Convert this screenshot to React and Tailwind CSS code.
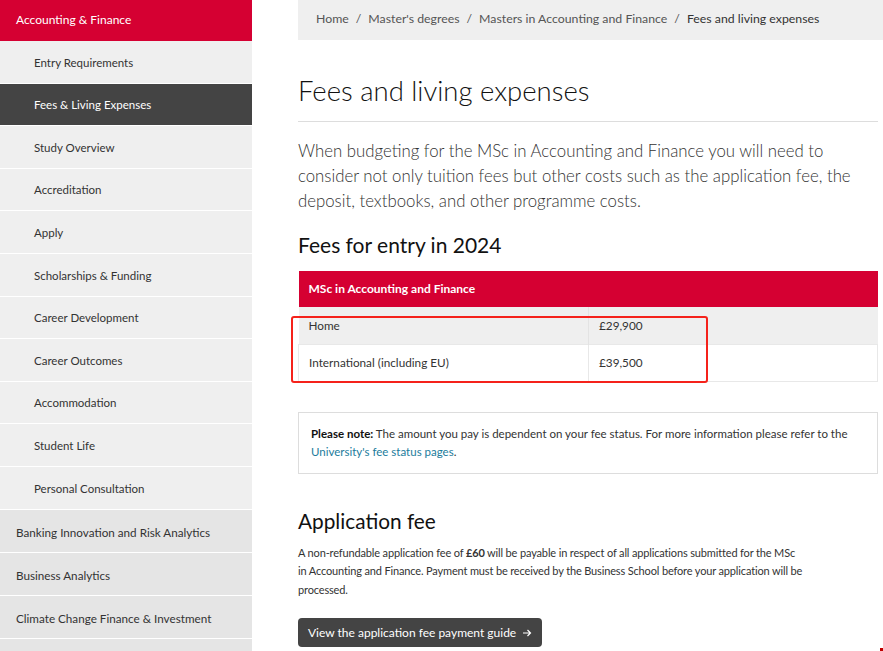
import React from "react";

const subItems = [
  "Entry Requirements",
  "Fees & Living Expenses",
  "Study Overview",
  "Accreditation",
  "Apply",
  "Scholarships & Funding",
  "Career Development",
  "Career Outcomes",
  "Accommodation",
  "Student Life",
  "Personal Consultation",
];

const topItems = [
  "Banking Innovation and Risk Analytics",
  "Business Analytics",
  "Climate Change Finance & Investment",
  "Finance",
];

const font = { fontFamily: "Lato, 'Noto Sans', sans-serif" };

function Sidebar() {
  return (
    <aside className="w-[252px] shrink-0 text-[11.5px]">
      <div className="h-[41px] bg-[#d50032] text-white flex items-center pl-4 pb-[1px] text-[12px]">
        Accounting &amp; Finance
      </div>
      {subItems.map((item) => {
        const active = item === "Fees & Living Expenses";
        return (
          <div
            key={item}
            className={
              "h-[42.6px] border-b border-white flex items-center pl-[34px] pt-[1px] " +
              (active ? "bg-[#444444] text-white" : "bg-[#efefef] text-[#333]")
            }
          >
            {item}
          </div>
        );
      })}
      {topItems.map((item) => (
        <div
          key={item}
          className="h-[43px] border-b border-white flex items-center pl-4 pt-[5px] bg-[#e5e5e5] text-[#333] text-[11.7px]"
        >
          {item}
        </div>
      ))}
    </aside>
  );
}

function Breadcrumb() {
  const parts = ["Home", "Master's degrees", "Masters in Accounting and Finance"];
  return (
    <nav className="h-10 bg-[#efefef] flex items-center pl-[18px] pb-[2px] text-[12.3px] text-[#555] whitespace-nowrap">
      {parts.map((p) => (
        <span key={p} className="flex items-center">
          <span>{p}</span>
          <span className="mx-[7px]">/</span>
        </span>
      ))}
      <span className="text-[#333]">Fees and living expenses</span>
    </nav>
  );
}

function FeesTable() {
  return (
    <div className="relative mt-[12px] mr-[5px]">
      <table className="w-full border-collapse text-[11.75px] text-[#333]">
        <thead>
          <tr className="bg-[#d50032] text-white h-9">
            <th colSpan={2} className="text-left font-bold text-[12px] pl-[10px]">
              MSc in Accounting and Finance
            </th>
          </tr>
        </thead>
        <tbody>
          <tr className="bg-[#efefef] h-[37px]">
            <td className="pl-[10px] w-[290px] border-r border-[#e3e3e3] align-top pt-[10px]">Home</td>
            <td className="pl-[10px] align-top pt-[10px]">£29,900</td>
          </tr>
          <tr className="bg-white h-[37px] border border-[#e8e8e8]">
            <td className="pl-[10px] border-r border-[#e8e8e8]">International (including EU)</td>
            <td className="pl-[10px]">£39,500</td>
          </tr>
        </tbody>
      </table>
      {/* highlight around the fee rows */}
      <div className="absolute left-[-7px] top-[45px] w-[417px] h-[67px] border-2 border-[#f5221b] rounded-[3px] pointer-events-none" />
    </div>
  );
}

export default function App() {
  return (
    <div className="w-[883px] h-[651px] overflow-hidden bg-white flex relative" style={font}>
      <Sidebar />
      <main className="flex-1 ml-[46px] text-[#222]">
        <Breadcrumb />
        <div>
          <h1 className="text-[27.5px] font-light text-[#111] mt-[33px] leading-[36px]">
            Fees and living expenses
          </h1>
          <div className="h-px bg-[#dddddd] mt-[12px] mr-[5px]" />
          <p className="text-[16.8px] font-light leading-[25px] text-[#333] mt-[16px] pr-[25px]">
            When budgeting for the MSc in Accounting and Finance you will need to consider not only
            tuition fees but other costs such as the application fee, the deposit, textbooks, and
            other programme costs.
          </p>
          <h2 className="text-[21px] text-[#111] mt-[18px] leading-[28px]">Fees for entry in 2024</h2>
          <FeesTable />
          <div className="mt-[30px] mr-[5px] border border-[#dddddd] px-3 py-[12px] text-[11.5px] leading-[18px] text-[#333]">
            <span className="font-bold text-[#111]">Please note:</span> The amount you pay is
            dependent on your fee status. For more information please refer to the{" "}
            <span className="text-[#1b7c9c]">University's fee status pages</span>.
          </div>
          <h2 className="text-[20.8px] text-[#111] mt-[33px] leading-[28px]">Application fee</h2>
          <p className="w-[516px] text-[11px] tracking-[-0.15px] leading-[18.5px] text-[#333] mt-[9px]">
            A non-refundable application fee of <span className="font-bold">£60</span> will be
            payable in respect of all applications submitted for the MSc in{"\u00a0"}Accounting and
            Finance. Payment must be received by the Business School before your application will
            be processed.
          </p>
          <button className="mt-[19px] h-[29px] px-[10px] bg-[#444444] text-white text-[12px] rounded-[4px] flex items-center gap-[6px]">
            View the application fee payment guide
            <svg width="10" height="10" viewBox="0 0 10 10" fill="none" stroke="currentColor" strokeWidth="1.2">
              <path d="M1 5h7.5M5.5 2l3 3-3 3" />
            </svg>
          </button>
        </div>
      </main>
      <span className="absolute right-0 bottom-0 w-[3px] h-[3px] bg-[#c00000]" />
    </div>
  );
}
